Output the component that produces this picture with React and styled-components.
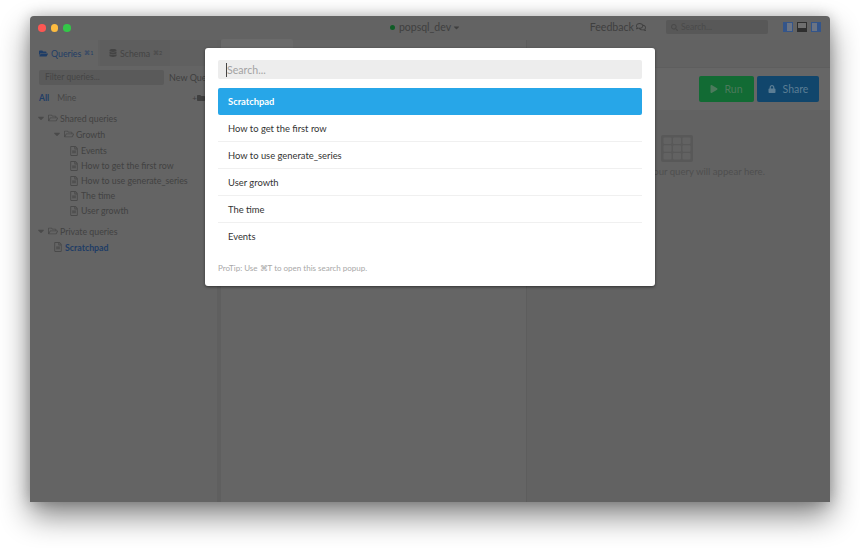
import React from 'react';
import styled, { createGlobalStyle } from 'styled-components';
import {
  FaFolderOpen, FaDatabase, FaRegFolderOpen, FaRegFileAlt, FaPlay, FaLock,
  FaCaretDown, FaSearch, FaRegComments, FaFolder,
} from 'react-icons/fa';

const GlobalStyle = createGlobalStyle`
  html, body { margin: 0; padding: 0; background: #fff; }
  body { font-family: Lato, "Open Sans", sans-serif; overflow: hidden; }
`;

const Page = styled.div`
  width: 860px;
  height: 548px;
  padding: 16px 30px 46px;
  box-sizing: border-box;
`;

const Window = styled.div`
  position: relative;
  height: 486px;
  background: #636363;
  border-radius: 4px;
  box-shadow: 0 14px 30px rgba(0, 0, 0, 0.48), 0 0 14px rgba(0, 0, 0, 0.22);
  display: flex;
  flex-direction: column;
  color: #3f3f3f;
  font-size: 10px;
`;

const TitleBar = styled.div`
  height: 24px;
  flex: none;
  display: grid;
  grid-template-columns: 1fr auto 1fr;
  align-items: center;
  padding: 0 9px 0 8px;
`;

const Lights = styled.div`
  display: flex;
  gap: 5px;
`;

const Light = styled.span`
  width: 7.5px;
  height: 7.5px;
  border-radius: 50%;
  background: ${p => p.$color};
`;

const DbName = styled.div`
  display: flex;
  align-items: center;
  gap: 3px;
  font-size: 10.5px;
  margin: -2px 0 0 -8px;
  svg { margin-left: -2px; }
`;

const StatusDot = styled.span`
  width: 5px;
  height: 5px;
  border-radius: 50%;
  margin-right: 1px;
  background: #0f5c26;
`;

const TitleRight = styled.div`
  display: flex;
  align-items: center;
  justify-content: flex-end;
  margin-top: -2px;
`;

const Feedback = styled.div`
  display: flex;
  align-items: center;
  gap: 2px;
  font-size: 10.6px;
  margin-right: 20px;
`;

const GlobalSearch = styled.div`
  width: 102px;
  height: 14px;
  background: #585858;
  border-radius: 2px;
  display: flex;
  align-items: center;
  gap: 3px;
  padding-left: 5px;
  box-sizing: border-box;
  font-size: 8.5px;
  color: #4a4a4a;
  margin-right: 15px;
`;

const PaneIcons = styled.div`
  display: flex;
  gap: 4px;
`;

const Body = styled.div`
  flex: 1;
  min-height: 0;
  display: grid;
  grid-template-columns: 187px 4px 305px 304px;
`;

const Sidebar = styled.aside`
  background: #646464;
  display: flex;
  flex-direction: column;
  overflow: hidden;
`;

const Tabs = styled.div`
  height: 26px;
  display: flex;
  gap: 2px;
  background: #606060;
`;

const Tab = styled.div`
  width: ${p => p.$width}px;
  box-sizing: border-box;
  display: flex;
  align-items: center;
  gap: 3px;
  padding-left: 9px;
  font-size: 8.8px;
  white-space: nowrap;
  background: ${p => (p.$active ? '#646464' : '#5e5e5e')};
  color: ${p => (p.$active ? '#1f3d66' : '#444')};
  small { font-size: 5.5px; }
`;

const FilterRow = styled.div`
  display: flex;
  align-items: center;
  gap: 5px;
  padding: 4px 0 0 9px;
  font-size: 9px;
  white-space: nowrap;
  overflow: hidden;
`;

const FilterInput = styled.div`
  width: 125px;
  height: 15px;
  flex: none;
  background: #5a5a5a;
  border-radius: 2px;
  padding-left: 6px;
  box-sizing: border-box;
  line-height: 15px;
  font-size: 8.5px;
  color: #454545;
`;

const Scope = styled.div`
  display: flex;
  align-items: center;
  padding: 6px 12px 0 9px;
  font-size: 8.5px;
  height: 13px;
`;

const ScopeLink = styled.span`
  color: ${p => (p.$active ? '#1f3d66' : '#464646')};
  font-weight: ${p => (p.$active ? 700 : 400)};
  margin-right: 8px;
`;

const AddFolder = styled.span`
  margin-left: auto;
  display: flex;
  align-items: center;
  font-size: 8px;
`;

const Tree = styled.div`
  padding-top: 6px;
  display: flex;
  flex-direction: column;
`;

const TreeRow = styled.div`
  height: ${p => (p.$file ? 15 : 16)}px;
  flex: none;
  display: flex;
  align-items: center;
  gap: 2px;
  padding-left: ${p => p.$indent}px;
  font-size: 8.8px;
  white-space: nowrap;
  color: ${p => (p.$active ? '#1f3d66' : '#424242')};
  font-weight: ${p => (p.$active ? 700 : 400)};
  svg { color: #4a4a4a; flex: none; }
`;

const TreeGap = styled.div`
  height: ${p => p.$size}px;
`;

const Splitter = styled.div`
  background: #5f5f5f;
`;

const Editor = styled.section`
  background: #656565;
  display: flex;
  flex-direction: column;
`;

const EditorTab = styled.div`
  width: 72px;
  height: 28px;
  margin-top: -1px;
  background: #6a6a6a;
  border-radius: 2px 2px 0 0;
`;

const Results = styled.section`
  display: flex;
  flex-direction: column;
  background: #626262;
  border-left: 1px solid #5d5d5d;
`;

const Toolbar = styled.div`
  margin-top: 27px;
  height: 43px;
  background: #666;
  border-top: 1px solid #5e5e5e;
  box-sizing: border-box;
  display: flex;
  justify-content: flex-end;
  align-items: center;
  gap: 3px;
  padding: 0 11px 1px 0;
`;

const ActionButton = styled.div`
  height: 26px;
  width: ${p => p.$width}px;
  background: ${p => p.$color};
  color: ${p => p.$textColor};
  border-radius: 2px;
  display: flex;
  align-items: center;
  justify-content: center;
  gap: ${p => p.$gap}px;
  font-size: 10.5px;
`;

const EmptyState = styled.div`
  display: flex;
  flex-direction: column;
  align-items: center;
  padding: 25px 3px 0 0;
  color: #4f4f4f;
  font-size: 9.6px;
  gap: 4px;
  white-space: nowrap;
`;

const Overlay = styled.div`
  position: absolute;
  inset: 0;
  display: flex;
  justify-content: center;
  padding-top: 32px;
`;

const Modal = styled.div`
  width: 450px;
  height: 238px;
  background: #fff;
  border-radius: 3px;
  box-sizing: border-box;
  padding: 12px 13px 0;
  box-shadow: 0 1px 3px rgba(0, 0, 0, 0.5);
  color: #333;
`;

const SearchBox = styled.div`
  height: 19px;
  background: #ededed;
  border-radius: 2px;
  padding-left: 8px;
  display: flex;
  align-items: center;
  font-size: 10.6px;
  color: #a3a3a3;
`;

const Caret = styled.span`
  width: 1px;
  height: 14px;
  background: #444;
`;

const ResultList = styled.div`
  margin-top: 9px;
  display: flex;
  flex-direction: column;
`;

const ResultRow = styled.div`
  height: 27px;
  box-sizing: border-box;
  display: flex;
  align-items: center;
  padding-left: 10px;
  font-size: 9.4px;
  border-radius: ${p => (p.$selected ? '2px' : 0)};
  background: ${p => (p.$selected ? '#27a6e8' : '#fff')};
  color: ${p => (p.$selected ? '#fff' : '#333')};
  font-weight: ${p => (p.$selected ? 700 : 400)};
  border-bottom: ${p => (p.$last || p.$selected ? 'none' : '1px solid #f0f0f0')};
`;

const ProTip = styled.div`
  margin-top: 13px;
  font-size: 8px;
  color: #a8a8a8;
`;

function PaneIcon({ side, dark }) {
  const line = dark ? '#2e2e2e' : '#34558a';
  const rest = dark ? '#6f6f6f' : '#6b7484';
  return (
    <svg width="10" height="10" viewBox="0 0 10 10">
      <rect x="0.5" y="0.5" width="9" height="9" fill={rest} stroke={line} />
      {side === 'left' && <rect x="1" y="1" width="3" height="8" fill={line} />}
      {side === 'right' && <rect x="6" y="1" width="3" height="8" fill={line} />}
      {side === 'bottom' && <rect x="1" y="6" width="8" height="3" fill={line} />}
    </svg>
  );
}

function TableIcon() {
  const cells = [];
  for (let r = 0; r < 3; r++) {
    for (let c = 0; c < 3; c++) {
      cells.push(<rect key={`${r}-${c}`} x={2.5 + c * 9.5} y={2.5 + r * 7.8} width="8" height="6.4" rx="1" fill="#626262" />);
    }
  }
  return (
    <svg width="32" height="27" viewBox="0 0 32 27">
      <rect width="32" height="27" rx="2" fill="#585858" />
      {cells}
    </svg>
  );
}

const growth = ['Events', 'How to get the first row', 'How to use generate_series', 'The time', 'User growth'];
const results = ['How to get the first row', 'How to use generate_series', 'User growth', 'The time', 'Events'];

export default function App() {
  return (
    <Page>
      <GlobalStyle />
      <Window>
        <TitleBar>
          <Lights>
            <Light $color="#fc5753" />
            <Light $color="#fdbc40" />
            <Light $color="#33c748" />
          </Lights>
          <DbName>
            <StatusDot />
            popsql_dev
            <FaCaretDown size={9} />
          </DbName>
          <TitleRight>
            <Feedback>
              Feedback
              <FaRegComments size={10} />
            </Feedback>
            <GlobalSearch>
              <FaSearch size={7} />
              Search...
            </GlobalSearch>
            <PaneIcons>
              <PaneIcon side="left" />
              <PaneIcon side="bottom" dark />
              <PaneIcon side="right" />
            </PaneIcons>
          </TitleRight>
        </TitleBar>
        <Body>
          <Sidebar>
            <Tabs>
              <Tab $active $width={68}>
                <FaFolderOpen size={9} />
                Queries <small>⌘1</small>
              </Tab>
              <Tab $width={70}>
                <FaDatabase size={8} />
                Schema <small>⌘2</small>
              </Tab>
            </Tabs>
            <FilterRow>
              <FilterInput>Filter queries...</FilterInput>
              New Query
            </FilterRow>
            <Scope>
              <ScopeLink $active>All</ScopeLink>
              <ScopeLink>Mine</ScopeLink>
              <AddFolder>
                +<FaFolder size={8} />
              </AddFolder>
            </Scope>
            <Tree>
              <TreeRow $indent={6}>
                <FaCaretDown size={10} />
                <FaRegFolderOpen size={10} />
                Shared queries
              </TreeRow>
              <TreeRow $indent={22}>
                <FaCaretDown size={10} />
                <FaRegFolderOpen size={10} />
                Growth
              </TreeRow>
              <TreeGap $size={1} />
              {growth.map(name => (
                <TreeRow key={name} $indent={39} $file>
                  <FaRegFileAlt size={10} />
                  {name}
                </TreeRow>
              ))}
              <TreeGap $size={5} />
              <TreeRow $indent={6}>
                <FaCaretDown size={10} />
                <FaRegFolderOpen size={10} />
                Private queries
              </TreeRow>
              <TreeRow $indent={23} $active>
                <FaRegFileAlt size={10} />
                Scratchpad
              </TreeRow>
            </Tree>
          </Sidebar>
          <Splitter />
          <Editor>
            <EditorTab />
          </Editor>
          <Results>
            <Toolbar>
              <ActionButton $width={55} $color="#126b34" $textColor="#4c7a5c" $gap={6}>
                <FaPlay size={8} />
                Run
              </ActionButton>
              <ActionButton $width={62} $color="#11466c" $textColor="#5b7d94" $gap={7}>
                <FaLock size={8} />
                Share
              </ActionButton>
            </Toolbar>
            <EmptyState>
              <TableIcon />
              The results of your query will appear here.
            </EmptyState>
          </Results>
        </Body>
        <Overlay>
          <Modal>
            <SearchBox>
              <Caret />
              Search...
            </SearchBox>
            <ResultList>
              <ResultRow $selected>Scratchpad</ResultRow>
              {results.map((name, i) => (
                <ResultRow key={name} $last={i === results.length - 1}>{name}</ResultRow>
              ))}
            </ResultList>
            <ProTip>ProTip: Use ⌘T to open this search popup.</ProTip>
          </Modal>
        </Overlay>
      </Window>
    </Page>
  );
}
